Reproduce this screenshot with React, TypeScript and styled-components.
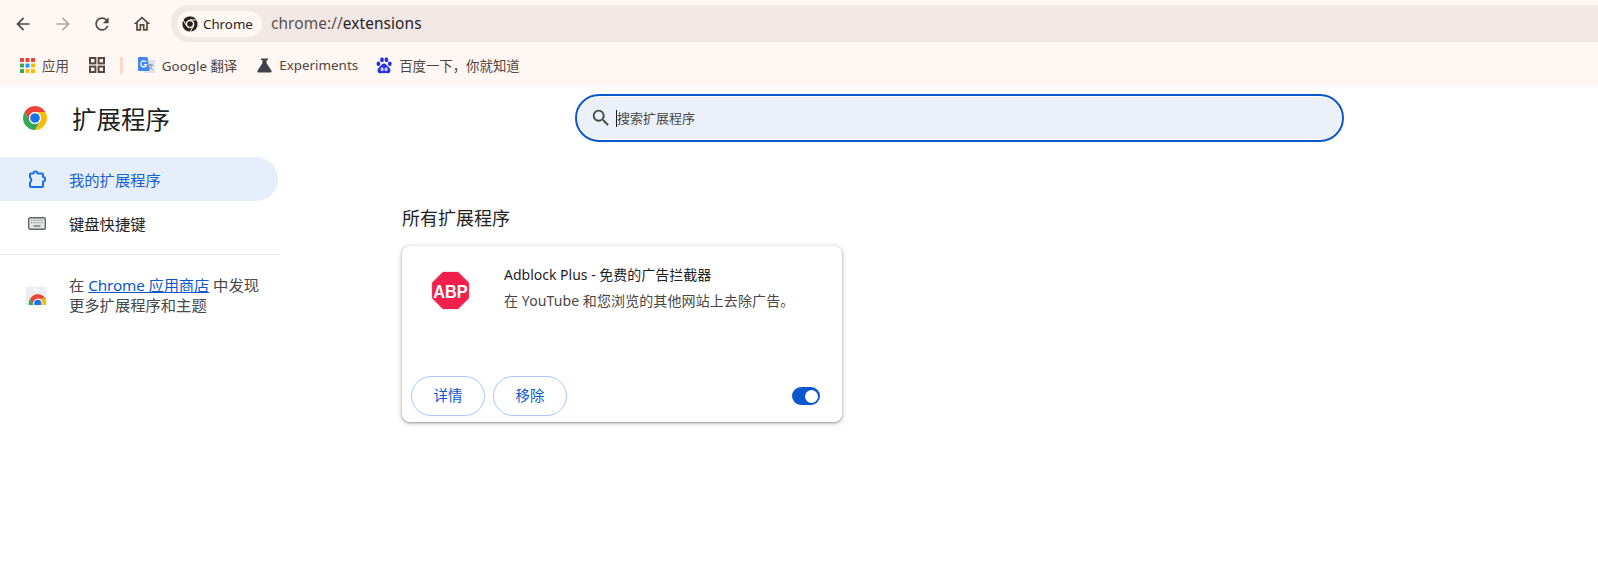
import React from 'react';
import styled, { createGlobalStyle } from 'styled-components';
import { MdArrowBack, MdArrowForward, MdRefresh, MdOutlineHome, MdSearch } from 'react-icons/md';

const Global = createGlobalStyle`
  html, body { margin: 0; padding: 0; background: #fff; }
  body { font-family: "Noto Sans", "Noto Sans CJK SC", sans-serif; }
  a { color: inherit; }
`;

const Window = styled.div`
  width: 1598px;
  height: 583px;
  overflow: hidden;
  display: flex;
  flex-direction: column;
`;

const Chrome = styled.header`
  height: 87px;
  background: #fff7f4;
  flex: none;
  display: flex;
  flex-direction: column;
`;

const AddressRow = styled.div`
  height: 47px;
  display: flex;
  align-items: flex-start;
  padding-top: 5px;
  box-sizing: border-box;
`;

const NavButtons = styled.div`
  width: 171px;
  height: 37px;
  flex: none;
  display: flex;
  align-items: center;
  padding-left: 13px;
  box-sizing: border-box;
  gap: 19.6px;
`;

const NavIcon = styled.span<{ $muted?: boolean }>`
  width: 20px;
  height: 20px;
  display: flex;
  align-items: center;
  justify-content: center;
  font-size: 20px;
  color: ${p => (p.$muted ? '#b3a9a5' : '#574640')};
`;

const Omnibox = styled.div`
  flex: 1;
  height: 37px;
  background: #f1e7e5;
  border-radius: 18px 0 0 18px;
  display: flex;
  align-items: center;
  padding-left: 6px;
  box-sizing: border-box;
`;

const SiteChip = styled.div`
  width: 85px;
  height: 26px;
  background: #fff7f4;
  border-radius: 13px;
  display: flex;
  align-items: center;
  padding-left: 5px;
  box-sizing: border-box;
  gap: 5px;
  font-size: 13.3px;
  color: #2a211e;
`;

const Url = styled.span`
  margin-left: 9px;
  font-size: 15.4px;
  color: #2a211e;
  letter-spacing: 0.1px;
  i { font-style: normal; color: #5d504b; }
`;

const BookmarkRow = styled.nav`
  height: 40px;
  display: flex;
  align-items: center;
  padding-left: 20px;
  padding-bottom: 4px;
  box-sizing: border-box;
  font-size: 13.4px;
  color: #51443e;
`;

const Bookmark = styled.span<{ $left?: number }>`
  display: flex;
  align-items: center;
  gap: 7px;
  margin-left: ${p => p.$left ?? 0}px;
  white-space: nowrap;
`;

const Separator = styled.span`
  width: 3px;
  height: 17px;
  margin-left: 15px;
  background: #fdd9c5;
  border-radius: 1px;
`;

const Body = styled.div`
  flex: 1;
  display: flex;
`;

const Sidebar = styled.aside`
  width: 280px;
  flex: none;
`;

const Brand = styled.div`
  height: 64px;
  padding: 19px 0 0 23px;
  box-sizing: border-box;
  display: flex;
  align-items: flex-start;
  gap: 25px;
`;

const Title = styled.h1`
  margin: 1px 0 0;
  font-size: 24.5px;
  line-height: 26px;
  font-weight: 400;
  color: #1f1f1f;
`;

const NavList = styled.div`
  margin-top: 6px;
  display: flex;
  flex-direction: column;
`;

const NavItem = styled.div<{ $active?: boolean }>`
  width: 278px;
  height: 44px;
  display: flex;
  align-items: center;
  padding-left: 26px;
  box-sizing: border-box;
  gap: 22px;
  font-size: 15.3px;
  border-radius: 0 22px 22px 0;
  background: ${p => (p.$active ? '#e6eefb' : 'transparent')};
  color: ${p => (p.$active ? '#1a5fd0' : '#1f1f1f')};
`;

const NavGlyph = styled.span`
  width: 21px;
  height: 21px;
  display: flex;
  align-items: center;
  justify-content: center;
`;

const Divider = styled.hr`
  margin: 9px 0 0;
  border: 0;
  border-top: 1px solid #e8e8e8;
`;

const Promo = styled.div`
  display: flex;
  gap: 23px;
  padding: 20px 0 0 26px;
  font-size: 15.3px;
  line-height: 20px;
  color: #474747;
`;

const PromoIcon = styled.span`
  margin-top: 12px;
  flex: none;
  width: 20px;
  height: 19px;
`;

const StoreLink = styled.a`
  color: #0b57d0;
  text-decoration: underline;
  letter-spacing: -0.15px;
`;

const Main = styled.main`
  flex: 1;
  padding: 7px 0 0 295px;
`;

const Search = styled.div`
  width: 769px;
  height: 48px;
  box-sizing: border-box;
  border: 2px solid #0b57d0;
  border-radius: 24px;
  background: #ecf0f8;
  box-shadow: inset 0 0 0 1px #fff;
  display: flex;
  align-items: center;
  padding-left: 13px;
  gap: 4px;
  font-size: 22px;
  color: #444746;
`;

const Placeholder = styled.span`
  font-size: 13px;
  line-height: 17px;
  border-left: 1px solid #1f1f1f;
  color: #474747;
`;

const Content = styled.section`
  margin: 64px 0 0 -173px;
`;

const SectionTitle = styled.h2`
  margin: 0;
  font-size: 18px;
  line-height: 24px;
  font-weight: 400;
  color: #1f1f1f;
`;

const Card = styled.article`
  margin-top: 16px;
  width: 440px;
  height: 176px;
  box-sizing: border-box;
  border-radius: 8px;
  background: #fff;
  box-shadow: 0 1px 2px rgba(60, 64, 67, 0.35), 0 1px 4px 1px rgba(60, 64, 67, 0.25);
  display: flex;
  flex-direction: column;
  justify-content: space-between;
`;

const CardTop = styled.div`
  display: flex;
  padding: 19px 0 0 29px;
  gap: 34px;
`;

const CardLogo = styled.span`
  margin-top: 6px;
  width: 39px;
  height: 39px;
  flex: none;
`;

const CardText = styled.div`
  display: flex;
  flex-direction: column;
  gap: 6px;
  line-height: 20px;
  font-size: 14px;
`;

const ExtName = styled.div`
  color: #1f1f1f;
`;

const ExtDesc = styled.div`
  color: #474747;
  letter-spacing: 0.1px;
`;

const CardFooter = styled.div`
  display: flex;
  align-items: center;
  padding: 0 22px 6px 9px;
  gap: 8px;
`;

const PillButton = styled.button`
  width: 74px;
  height: 40px;
  border: 1px solid #a8c7fa;
  border-radius: 20px;
  background: #fff;
  color: #0b57d0;
  font: inherit;
  font-size: 14.4px;
  padding: 0 0 3px;
`;

const Toggle = styled.span`
  margin-left: auto;
  width: 28px;
  height: 18px;
  border-radius: 9px;
  background: #0b57d0;
  display: flex;
  align-items: center;
  justify-content: flex-end;
  padding-right: 2px;
  box-sizing: border-box;
  &::after {
    content: '';
    width: 13px;
    height: 13px;
    border-radius: 50%;
    background: #fff;
  }
`;

const SEGMENTS = [
  'M24 14h17.32A20 20 0 0 0 6.68 14l8.66 15A10 10 0 0 1 24 14z',
  'M41.32 14H24a10 10 0 0 1 8.66 15L24 44a20 20 0 0 0 17.32-30z',
  'M6.68 14A20 20 0 0 0 24 44l8.66-15a10 10 0 0 1-17.32 0z',
];

const ColorSegments = () => (
  <>
    <path fill="#ea4335" d={SEGMENTS[0]} />
    <path fill="#fbbc04" d={SEGMENTS[1]} />
    <path fill="#34a853" d={SEGMENTS[2]} />
    <circle cx="24" cy="24" r="10" fill="#fff" />
    <circle cx="24" cy="24" r="8" fill="#1a73e8" />
  </>
);

const ChromeLogo = ({ size }: { size: number }) => (
  <svg width={size} height={size} viewBox="4 4 40 40">
    <ColorSegments />
  </svg>
);

const ChipLogo = () => (
  <svg width="16" height="16" viewBox="4 4 40 40">
    {SEGMENTS.map(d => (
      <path key={d} d={d} fill="#2a211e" stroke="#fff7f4" strokeWidth="2" />
    ))}
    <circle cx="24" cy="24" r="9" fill="#fff7f4" />
    <circle cx="24" cy="24" r="7" fill="#2a211e" />
  </svg>
);

const AppsIcon = () => {
  const colors = ['#ea4335', '#ea4335', '#ea4335', '#34a853', '#1a9cf0', '#fbbc04', '#34a853', '#fbbc04', '#fbbc04'];
  return (
    <svg width="15" height="15" viewBox="0 0 15 15">
      {colors.map((c, i) => (
        <rect key={i} x={(i % 3) * 5.5} y={Math.floor(i / 3) * 5.5} width="4" height="4" rx="0.6" fill={c} />
      ))}
    </svg>
  );
};

const TabGridIcon = () => (
  <svg width="16" height="16" viewBox="0 0 16 16" fill="none" stroke="#574640" strokeWidth="2">
    <rect x="1" y="1" width="5.4" height="5.4" />
    <rect x="9.6" y="1" width="5.4" height="5.4" />
    <rect x="1" y="9.6" width="5.4" height="5.4" />
    <rect x="9.6" y="9.6" width="5.4" height="5.4" />
  </svg>
);

const TranslateIcon = () => (
  <svg width="17" height="17" viewBox="0 0 17 17">
    <rect x="6" y="3" width="11" height="13" rx="1" fill="#dfe3e6" />
    <path d="M10 8h5M12.5 7v1M14 8c-.5 2-2 3.5-3.5 4.5M11 9.5c.8 1.3 2 2.3 3.5 3" stroke="#7a8288" strokeWidth="0.9" fill="none" />
    <path d="M1 0h8.5l2 14H1a1 1 0 0 1-1-1V1a1 1 0 0 1 1-1z" fill="#4285f4" />
    <path d="M8.2 5.2a3 3 0 1 0 .5 2.4H5.8" stroke="#fff" strokeWidth="1.2" fill="none" />
  </svg>
);

const FlaskIcon = () => (
  <svg width="15" height="15" viewBox="0 0 15 15">
    <path d="M4 0.5h7v1.4H9.6v3.4l4.9 7.5c.5.9 0 1.7-1 1.7h-12c-1 0-1.5-.8-1-1.7l4.9-7.5V1.9H4z" fill="#3f4347" />
  </svg>
);

const BaiduIcon = () => (
  <svg width="16" height="17" viewBox="0 0 16 17" fill="#2932e1">
    <rect width="16" height="17" fill="#fff" />
    <ellipse cx="2.4" cy="6.8" rx="1.9" ry="2.4" />
    <ellipse cx="6" cy="2.8" rx="1.9" ry="2.5" />
    <ellipse cx="10.4" cy="2.8" rx="1.9" ry="2.5" />
    <ellipse cx="13.8" cy="6.8" rx="1.9" ry="2.4" />
    <path d="M8 6.5c-2 0-2.8 2-4.3 3.2C2.3 10.9 1.5 12 1.5 13.4c0 2 1.7 3.2 3.5 2.9 1.2-.2 2-.4 3-.4s1.8.2 3 .4c1.8.3 3.5-.9 3.5-2.9 0-1.4-.8-2.5-2.2-3.7C10.8 8.5 10 6.5 8 6.5z" />
    <rect x="4.6" y="10.5" width="3" height="3.6" rx="1.2" fill="#cdd0ff" />
    <rect x="8.6" y="10.5" width="3" height="3.6" rx="1.2" fill="#cdd0ff" />
  </svg>
);

const ExtensionIcon = () => (
  <svg width="18" height="18" viewBox="0 0 18 18" fill="none" stroke="#1a6fe8" strokeWidth="2" strokeLinejoin="round">
    <path d="M3 3.5H5.5a2 2 0 0 1 4 0H14a1 1 0 0 1 1 1V7a2 2 0 0 1 0 4.5V16a1 1 0 0 1-1 1H3a1 1 0 0 1-1-1V12.5a3 3 0 0 0 0-5V4.5a1 1 0 0 1 1-1z" />
  </svg>
);

const KeyboardIcon = () => (
  <svg width="18" height="13" viewBox="0 0 18 13">
    <rect x="0.7" y="0.7" width="16.6" height="11.6" rx="1.5" fill="#e6e6e6" stroke="#5f6368" strokeWidth="1.4" />
    <path d="M3 3.3h12M3 5.8h12" stroke="#7d8085" strokeWidth="1.1" strokeDasharray="1.2 0.9" />
    <path d="M5.5 9h7" stroke="#5f6368" strokeWidth="1.2" />
  </svg>
);

const StoreIcon = () => (
  <svg width="20" height="19" viewBox="0 0 20 19">
    <defs>
      <clipPath id="store-clip"><rect x="0" y="0" width="20" height="18" /></clipPath>
    </defs>
    <g clipPath="url(#store-clip)">
      <rect x="0" y="0" width="20" height="18" fill="#eceff1" />
      <rect x="7" y="2" width="6" height="1.6" fill="#fff" />
      <g transform="translate(1 5.5) scale(0.45)">
        <ColorSegments />
      </g>
    </g>
  </svg>
);

const AbpLogo = () => (
  <svg width="39" height="39" viewBox="0 0 39 39" overflow="visible">
    <path d="M11.5 0.5h16l11 11v16l-11 11h-16l-11-11v-16z" fill="#f01f4b" stroke="#eaeaea" strokeWidth="1.2" />
    <text transform="translate(19.5 26.5) scale(0.86 1)" textAnchor="middle" fontFamily="Liberation Sans, sans-serif" fontWeight="700" fontSize="19" fill="#fff">ABP</text>
  </svg>
);

export default function App() {
  return (
    <Window>
      <Global />
      <Chrome>
        <AddressRow>
          <NavButtons>
            <NavIcon><MdArrowBack /></NavIcon>
            <NavIcon $muted><MdArrowForward /></NavIcon>
            <NavIcon><MdRefresh /></NavIcon>
            <NavIcon><MdOutlineHome /></NavIcon>
          </NavButtons>
          <Omnibox>
            <SiteChip><ChipLogo />Chrome</SiteChip>
            <Url><i>chrome://</i>extensions</Url>
          </Omnibox>
        </AddressRow>
        <BookmarkRow>
          <Bookmark><AppsIcon />应用</Bookmark>
          <Bookmark $left={20}><TabGridIcon /></Bookmark>
          <Separator />
          <Bookmark $left={15}><TranslateIcon />Google 翻译</Bookmark>
          <Bookmark $left={20}><FlaskIcon />Experiments</Bookmark>
          <Bookmark $left={18}><BaiduIcon />百度一下，你就知道</Bookmark>
        </BookmarkRow>
      </Chrome>
      <Body>
        <Sidebar>
          <Brand>
            <ChromeLogo size={24} />
            <Title>扩展程序</Title>
          </Brand>
          <NavList>
            <NavItem $active>
              <NavGlyph><ExtensionIcon /></NavGlyph>
              我的扩展程序
            </NavItem>
            <NavItem>
              <NavGlyph><KeyboardIcon /></NavGlyph>
              键盘快捷键
            </NavItem>
          </NavList>
          <Divider />
          <Promo>
            <PromoIcon><StoreIcon /></PromoIcon>
            <div>
              在 <StoreLink href="#">Chrome 应用商店</StoreLink> 中发现<br />
              更多扩展程序和主题
            </div>
          </Promo>
        </Sidebar>
        <Main>
          <Search>
            <MdSearch />
            <Placeholder>搜索扩展程序</Placeholder>
          </Search>
          <Content>
            <SectionTitle>所有扩展程序</SectionTitle>
            <Card>
              <CardTop>
                <CardLogo><AbpLogo /></CardLogo>
                <CardText>
                  <ExtName>Adblock Plus - 免费的广告拦截器</ExtName>
                  <ExtDesc>在 YouTube 和您浏览的其他网站上去除广告。</ExtDesc>
                </CardText>
              </CardTop>
              <CardFooter>
                <PillButton>详情</PillButton>
                <PillButton>移除</PillButton>
                <Toggle />
              </CardFooter>
            </Card>
          </Content>
        </Main>
      </Body>
    </Window>
  );
}
